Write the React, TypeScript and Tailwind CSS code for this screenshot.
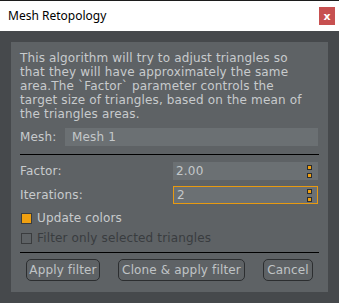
import React from 'react';

const font = { fontFamily: '"DejaVu Sans", Verdana, sans-serif' };

function SpinBox({ value, focused }: { value: string; focused?: boolean }) {
  return (
    <div
      className={`relative flex h-[18px] w-[145px] items-center bg-[#6b7073] pl-[3px] text-[12px] tracking-[0.2px] text-[#c4c8ca] ${
        focused ? 'border border-[#e89a10] pl-[2px]' : ''
      }`}
    >
      {value}
      <div className={`absolute flex flex-col gap-[3px] ${focused ? 'right-[5px] top-[2px]' : 'right-[6px] top-[3px]'}`}>
        <span className="block h-[5px] w-[5px] border border-[#2b2d2f] bg-[#f0a010]" />
        <span className="block h-[5px] w-[5px] border border-[#2b2d2f] bg-[#f0a010]" />
      </div>
    </div>
  );
}

function Checkbox({ label, checked, disabled }: { label: string; checked?: boolean; disabled?: boolean }) {
  return (
    <div className="flex h-[20px] items-center gap-[5px]">
      <span
        className={`ml-[1px] block h-[11px] w-[11px] border border-[#3a3c3e] ${checked ? 'bg-[#f0a010]' : 'bg-transparent'}`}
      />
      <span className={`text-[12px] tracking-[0.15px] ${disabled ? 'text-[#393c3f]' : 'text-[#c8cbcd]'}`}>{label}</span>
    </div>
  );
}

function Button({ label, width }: { label: string; width: string }) {
  return (
    <button
      className={`h-[22px] ${width} rounded-[5px] border border-[#2c2e30] text-[12px] leading-none tracking-[0.15px] text-[#c0c4c6]`}
    >
      {label}
    </button>
  );
}

export default function App() {
  return (
    <div className="flex h-[303px] w-[339px] flex-col bg-[#46494c]" style={font}>
      <div className="flex h-[31px] items-center justify-between border-t border-[#1c1c1c] bg-white pl-[8px] pr-[4px]">
        <span className="text-[12px] text-black" style={{ fontFamily: '"Noto Sans", "Open Sans", sans-serif' }}>
          Mesh Retopology
        </span>
        <span className="flex h-[18px] w-[16px] items-center justify-center bg-[#c75050] text-[11px] font-bold leading-none text-white">
          x
        </span>
      </div>
      <div className="flex-1 px-[11px] pb-[11px] pt-[11px]">
        <div className="flex h-full flex-col bg-[#5e6265] px-[9px] pt-[9px]">
          <p className="whitespace-nowrap text-[12px] leading-[14px] tracking-[0.15px] text-[#c8cbcd]">
            This algorithm will try to adjust triangles so
            <br />
            that they will have approximately the same
            <br />
            area.The `Factor` parameter controls the
            <br />
            target size of triangles, based on the mean of
            <br />
            the triangles areas.
          </p>
          <div className="mt-[7px] flex items-center">
            <span className="w-[45px] text-[12px] tracking-[0.15px] text-[#c8cbcd]">Mesh:</span>
            <div className="flex h-[18px] flex-1 items-center bg-[#6b7073] pl-[7px] text-[12px] tracking-[0.15px] text-[#c4c8ca]">
              Mesh 1
            </div>
            <span className="w-[1px]" />
          </div>
          <div className="mt-[8px] h-[1px] bg-black" />
          <div className="mt-[7px] flex items-center justify-between pr-[1px]">
            <span className="text-[12px] tracking-[0.15px] text-[#c8cbcd]">Factor:</span>
            <SpinBox value="2.00" />
          </div>
          <div className="mt-[6px] flex items-center justify-between pr-[1px]">
            <span className="text-[12px] tracking-[0.15px] text-[#c8cbcd]">Iterations:</span>
            <SpinBox value="2" focused />
          </div>
          <div className="mt-[4px] flex flex-col">
            <Checkbox label="Update colors" checked />
            <Checkbox label="Filter only selected triangles" disabled />
          </div>
          <div className="mt-[4px] h-[1px] bg-black" />
          <div className="mt-[6px] flex items-center gap-[18px] pl-[6px]">
            <Button label="Apply filter" width="w-[74px]" />
            <Button label="Clone & apply filter" width="w-[127px]" />
            <Button label="Cancel" width="w-[50px]" />
          </div>
        </div>
      </div>
    </div>
  );
}
